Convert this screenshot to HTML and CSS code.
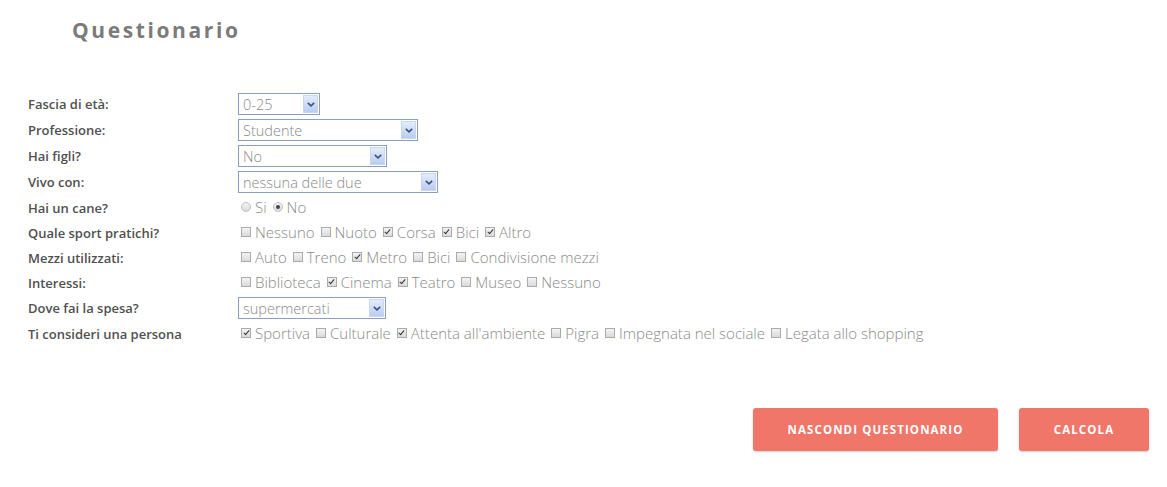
FILE: index.html
```html
<!DOCTYPE html>
<html lang="it">
<head>
<meta charset="utf-8">
<title>Questionario</title>
<link rel="stylesheet" href="styles.css">
</head>
<body>
<div class="page">
  <h1 class="title">Questionario</h1>
  <form class="form">
    <div class="row sel-row">
      <label class="lbl">Fascia di età:</label>
      <div class="ctrl"><span class="select w82"><select><option>0-25</option></select><span class="arrow"><svg width="8" height="5" viewBox="0 0 8 5"><path d="M0.8 0.8 L4 3.8 L7.2 0.8" fill="none" stroke="#3e5277" stroke-width="1.6"/></svg></span></span></div>
    </div>
    <div class="row sel-row">
      <label class="lbl">Professione:</label>
      <div class="ctrl"><span class="select w180"><select><option>Studente</option></select><span class="arrow"><svg width="8" height="5" viewBox="0 0 8 5"><path d="M0.8 0.8 L4 3.8 L7.2 0.8" fill="none" stroke="#3e5277" stroke-width="1.6"/></svg></span></span></div>
    </div>
    <div class="row sel-row">
      <label class="lbl">Hai figli?</label>
      <div class="ctrl"><span class="select w149"><select><option>No</option></select><span class="arrow"><svg width="8" height="5" viewBox="0 0 8 5"><path d="M0.8 0.8 L4 3.8 L7.2 0.8" fill="none" stroke="#3e5277" stroke-width="1.6"/></svg></span></span></div>
    </div>
    <div class="row sel-row">
      <label class="lbl">Vivo con:</label>
      <div class="ctrl"><span class="select w200"><select><option>nessuna delle due</option></select><span class="arrow"><svg width="8" height="5" viewBox="0 0 8 5"><path d="M0.8 0.8 L4 3.8 L7.2 0.8" fill="none" stroke="#3e5277" stroke-width="1.6"/></svg></span></span></div>
    </div>
    <div class="row">
      <label class="lbl">Hai un cane?</label>
      <div class="ctrl">
        <label class="opt"><input type="radio" name="cane" class="rd">Si</label>
        <label class="opt"><input type="radio" name="cane" class="rd" checked>No</label>
      </div>
    </div>
    <div class="row">
      <label class="lbl">Quale sport pratichi?</label>
      <div class="ctrl">
        <label class="opt"><input type="checkbox" class="cb">Nessuno</label>
        <label class="opt"><input type="checkbox" class="cb">Nuoto</label>
        <label class="opt"><input type="checkbox" class="cb" checked>Corsa</label>
        <label class="opt"><input type="checkbox" class="cb" checked>Bici</label>
        <label class="opt"><input type="checkbox" class="cb" checked>Altro</label>
      </div>
    </div>
    <div class="row">
      <label class="lbl">Mezzi utilizzati:</label>
      <div class="ctrl">
        <label class="opt"><input type="checkbox" class="cb">Auto</label>
        <label class="opt"><input type="checkbox" class="cb">Treno</label>
        <label class="opt"><input type="checkbox" class="cb" checked>Metro</label>
        <label class="opt"><input type="checkbox" class="cb">Bici</label>
        <label class="opt"><input type="checkbox" class="cb">Condivisione mezzi</label>
      </div>
    </div>
    <div class="row">
      <label class="lbl">Interessi:</label>
      <div class="ctrl">
        <label class="opt"><input type="checkbox" class="cb">Biblioteca</label>
        <label class="opt"><input type="checkbox" class="cb" checked>Cinema</label>
        <label class="opt"><input type="checkbox" class="cb" checked>Teatro</label>
        <label class="opt"><input type="checkbox" class="cb">Museo</label>
        <label class="opt"><input type="checkbox" class="cb">Nessuno</label>
      </div>
    </div>
    <div class="row sel-row">
      <label class="lbl">Dove fai la spesa?</label>
      <div class="ctrl"><span class="select w148"><select><option>supermercati</option></select><span class="arrow"><svg width="8" height="5" viewBox="0 0 8 5"><path d="M0.8 0.8 L4 3.8 L7.2 0.8" fill="none" stroke="#3e5277" stroke-width="1.6"/></svg></span></span></div>
    </div>
    <div class="row">
      <label class="lbl">Ti consideri una persona</label>
      <div class="ctrl">
        <label class="opt"><input type="checkbox" class="cb" checked>Sportiva</label>
        <label class="opt"><input type="checkbox" class="cb">Culturale</label>
        <label class="opt"><input type="checkbox" class="cb" checked>Attenta all'ambiente</label>
        <label class="opt"><input type="checkbox" class="cb">Pigra</label>
        <label class="opt"><input type="checkbox" class="cb">Impegnata nel sociale</label>
        <label class="opt"><input type="checkbox" class="cb">Legata allo shopping</label>
      </div>
    </div>
  </form>
  <div class="actions">
    <button type="button" class="btn btn-wide">NASCONDI QUESTIONARIO</button>
    <button type="button" class="btn btn-narrow">CALCOLA</button>
  </div>
</div>
</body>
</html>
```
FILE: styles.css
```css
* { box-sizing: border-box; }
html, body { margin: 0; padding: 0; background: #fff; }
body { font-family: "Open Sans", "Liberation Sans", sans-serif; }

.page { width: 1167px; height: 487px; padding-top: 16px; }

.title {
  margin: 0 0 0 72px;
  height: 28px;
  font-family: "Open Sans", sans-serif;
  font-size: 21px;
  font-weight: 700;
  letter-spacing: 2.6px;
  color: #7b7b7b;
  line-height: 28px;
}

.form {
  margin-top: 47px;
  padding-left: 28px;
  display: flex;
  flex-direction: column;
}

.row {
  display: grid;
  grid-template-columns: 210px 1fr;
  align-items: center;
  height: 25px;
}
.sel-row { height: 26px; }

.lbl {
  font-family: "Open Sans", sans-serif;
  font-size: 13px;
  font-weight: 600;
  color: #505050;
}

.ctrl {
  display: flex;
  align-items: center;
  gap: 6px;
  font-family: "Open Sans", sans-serif;
  font-weight: 300;
  font-size: 15px;
  line-height: 20px;
  color: #8a8a8a;
  margin-top: -1px;
}
.sel-row .ctrl { margin-top: 0; }

.opt { display: inline-flex; align-items: center; gap: 4px; }
.opt:first-child { padding-left: 3px; }

.select { position: relative; display: inline-block; height: 22px; }
.select select {
  appearance: none;
  -webkit-appearance: none;
  width: 100%;
  height: 22px;
  border: 1px solid #8ba0bf;
  border-radius: 0;
  background: #fff;
  font-family: "Open Sans", sans-serif;
  font-weight: 300;
  font-size: 14.5px;
  color: #8a8a8a;
  padding: 0 0 0 4px;
  outline: none;
}
.select .arrow {
  position: absolute;
  top: 2px;
  right: 2px;
  width: 15px;
  height: 18px;
  border: 1px solid #c8d6f0;
  background: linear-gradient(#e3ecfc, #b9cdf2);
  display: flex;
  align-items: center;
  justify-content: center;
  pointer-events: none;
}
.w82 { width: 82px; }
.w180 { width: 180px; }
.w149 { width: 149px; }
.w200 { width: 200px; }
.w148 { width: 148px; }

.cb, .rd {
  appearance: none;
  -webkit-appearance: none;
  margin: 0;
  width: 10px;
  height: 10px;
  border: 1px solid #ababab;
  background: linear-gradient(#f4f4f4, #dadada);
  position: relative;
  flex: none;
}
.cb:checked::after {
  content: "";
  position: absolute;
  left: 2.5px;
  top: 0px;
  width: 2px;
  height: 5px;
  border: solid #333;
  border-width: 0 1.5px 1.5px 0;
  transform: rotate(40deg);
}
.rd { border-radius: 50%; border-color: #c0c0c0; }
.rd:checked::after {
  content: "";
  position: absolute;
  left: 2px;
  top: 2px;
  width: 4px;
  height: 4px;
  border-radius: 50%;
  background: #444;
}

.actions {
  margin-top: 62px;
  display: flex;
  justify-content: flex-end;
  gap: 21px;
  padding-right: 18px;
}
.btn {
  height: 43px;
  border: none;
  border-radius: 3px;
  background: #ef7668;
  color: #fff;
  font-family: "Open Sans", sans-serif;
  font-weight: 700;
  font-size: 11.5px;
  letter-spacing: 1.1px;
  box-shadow: 0 1px 2px rgba(0,0,0,0.2);
}
.btn-wide { width: 245px; }
.btn-narrow { width: 130px; }
```
